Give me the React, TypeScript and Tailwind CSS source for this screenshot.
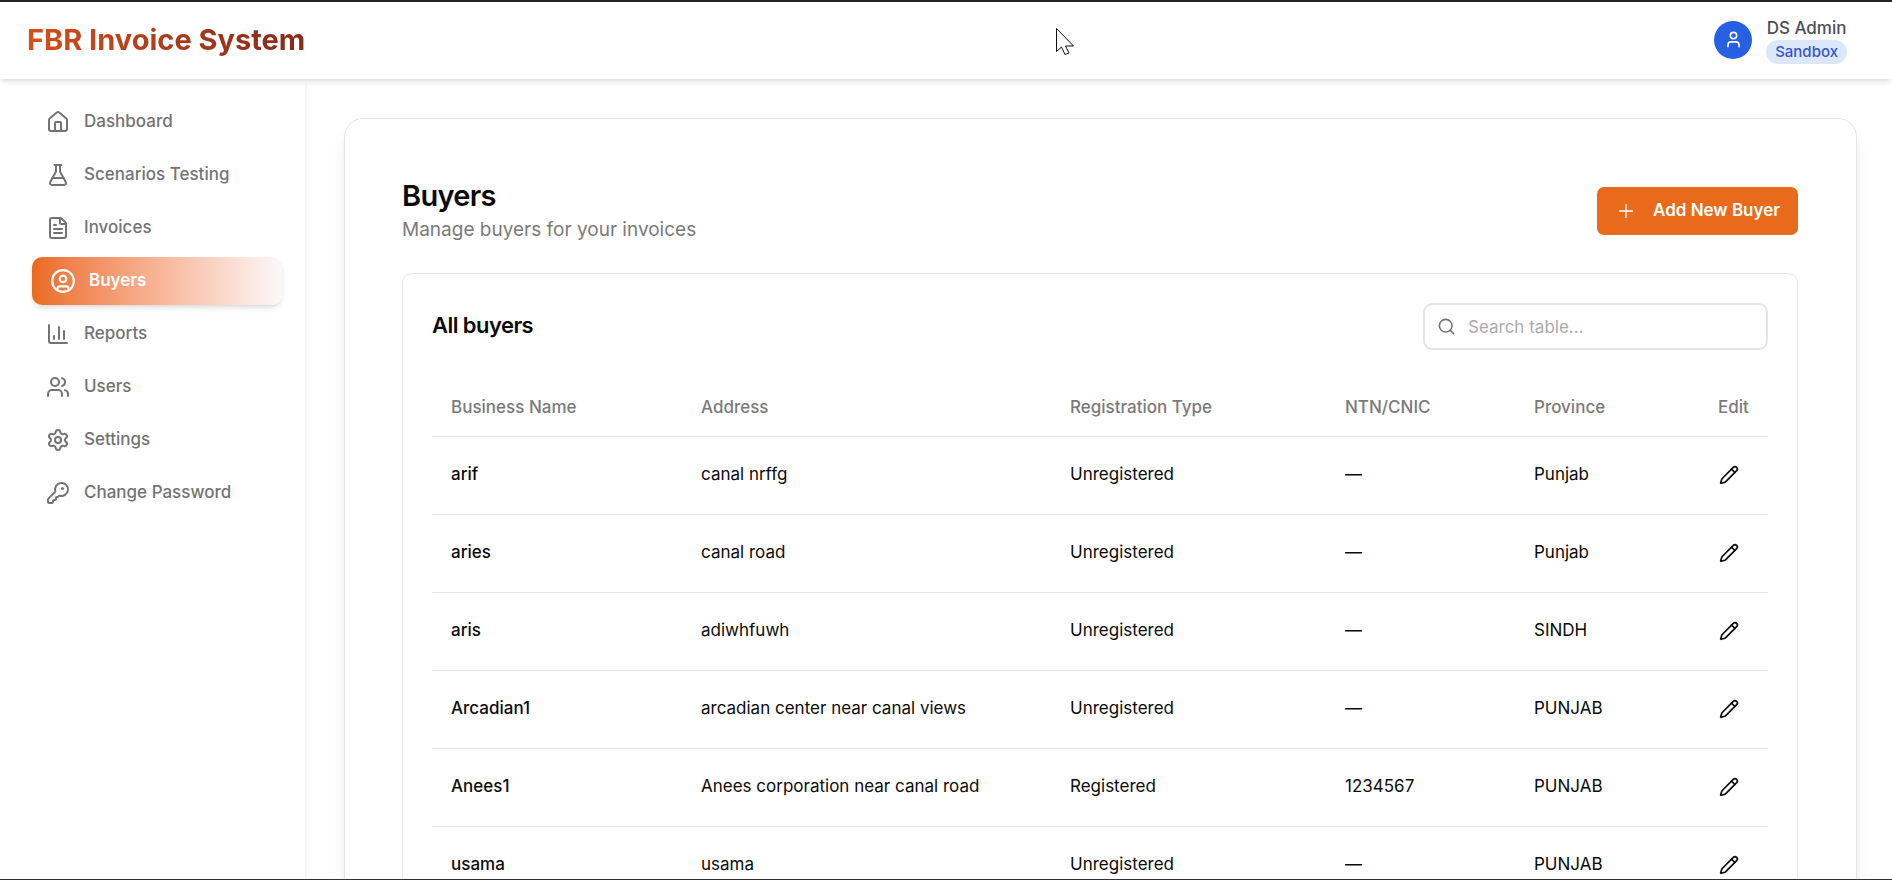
import {
  House, FlaskConical, FileText, CircleUser, BarChart3, Users, Settings, KeyRound,
  User, Plus, Search, Pencil
} from 'lucide-react';

const navItems = [
  { label: 'Dashboard', icon: House },
  { label: 'Scenarios Testing', icon: FlaskConical },
  { label: 'Invoices', icon: FileText },
  { label: 'Buyers', icon: CircleUser, active: true },
  { label: 'Reports', icon: BarChart3 },
  { label: 'Users', icon: Users },
  { label: 'Settings', icon: Settings },
  { label: 'Change Password', icon: KeyRound },
];

const buyers = [
  { name: 'arif', address: 'canal nrffg', type: 'Unregistered', ntn: '—', province: 'Punjab' },
  { name: 'aries', address: 'canal road', type: 'Unregistered', ntn: '—', province: 'Punjab' },
  { name: 'aris', address: 'adiwhfuwh', type: 'Unregistered', ntn: '—', province: 'SINDH' },
  { name: 'Arcadian1', address: 'arcadian center near canal views', type: 'Unregistered', ntn: '—', province: 'PUNJAB' },
  { name: 'Anees1', address: 'Anees corporation near canal road', type: 'Registered', ntn: '1234567', province: 'PUNJAB' },
  { name: 'usama', address: 'usama', type: 'Unregistered', ntn: '—', province: 'PUNJAB' },
];

function Header() {
  return (
    <header className="relative z-10 flex h-[79px] shrink-0 items-center justify-between border-t-2 border-[#222222] bg-white pr-[45px] pb-[2px] pl-[27px] shadow-md">
      <h1 className="bg-linear-to-r from-[#d4501a] to-[#862a1c] bg-clip-text text-[29px] font-bold text-transparent">
        FBR Invoice System
      </h1>
      <div className="flex items-center gap-[14px]">
        <div className="flex size-[38px] items-center justify-center rounded-full bg-[#2860e2] text-white">
          <User className="size-[19px]" />
        </div>
        <div className="flex flex-col items-center">
          <span className="text-[17px] leading-6 font-medium text-[#4b4f57]">DS Admin</span>
          <span className="rounded-full bg-[#dde7fb] px-[9px] text-[15px] leading-6 font-medium text-[#3654cc]">Sandbox</span>
        </div>
      </div>
    </header>
  );
}

function Sidebar() {
  return (
    <nav className="flex w-[305px] shrink-0 flex-col gap-[5px] bg-white pt-[19px] pr-[23px] pl-[32px] shadow-md">
      {navItems.map((item) => (
        <a
          key={item.label}
          href="#"
          className={
            item.active
              ? 'flex h-[48px] items-center gap-[13px] rounded-[10px] bg-linear-to-r from-[#ea6a1c] to-[#faf8fa] px-[18px] text-[17px] font-semibold text-white shadow-md'
              : 'flex h-[48px] items-center gap-[14px] rounded-[10px] px-[14px] text-[17px] font-medium text-[#737373]'
          }
        >
          <item.icon className={item.active ? 'size-[26px]' : 'size-[24px]'} strokeWidth={2} />
          {item.label}
        </a>
      ))}
    </nav>
  );
}

function BuyersTable() {
  return (
    <table className="mt-[29px] w-full table-fixed text-left text-[17px]">
      <thead>
        <tr className="h-[57px] border-b border-[#e5e5e5] text-[#7a7a7a]">
          <th className="w-[249px] px-[19px] font-medium">Business Name</th>
          <th className="w-[369px] px-[20px] font-medium">Address</th>
          <th className="w-[275px] px-[20px] font-medium">Registration Type</th>
          <th className="w-[189px] px-[20px] font-medium">NTN/CNIC</th>
          <th className="w-[185px] px-[20px] font-medium">Province</th>
          <th className="w-[69px] px-[19px] font-medium">Edit</th>
        </tr>
      </thead>
      <tbody>
        {buyers.map((buyer) => (
          <tr key={buyer.name} className="h-[78px] border-b border-[#e5e5e5] text-neutral-950">
            <td className="px-[19px] font-medium">{buyer.name}</td>
            <td className="px-[20px]">{buyer.address}</td>
            <td className="px-[20px]">{buyer.type}</td>
            <td className="px-[20px]">{buyer.ntn}</td>
            <td className="px-[20px]">{buyer.province}</td>
            <td className="px-[20px]">
              <button type="button" aria-label="Edit buyer" className="flex items-center">
                <Pencil className="size-[20px]" />
              </button>
            </td>
          </tr>
        ))}
      </tbody>
    </table>
  );
}

export default function App() {
  return (
    <div className="relative flex h-screen flex-col overflow-hidden border-b border-[#333333] bg-white font-[Inter,sans-serif]">
      <Header />
      <div className="flex min-h-0 flex-1">
        <Sidebar />
        <main className="min-w-0 flex-1 pt-[39px] pr-[35px] pl-[39px]">
          <div className="rounded-[19px] border border-[#e5e5e5] bg-white pt-[58px] pr-[58px] pb-[58px] pl-[57px] shadow-lg">
            <div className="flex items-center justify-between">
              <div>
                <h2 className="text-[29px] leading-[38px] font-semibold tracking-tight text-neutral-950">Buyers</h2>
                <p className="text-[19px] leading-[29px] text-[#7a7a7a]">Manage buyers for your invoices</p>
              </div>
              <button type="button" className="flex h-[48px] items-center rounded-[7px] bg-[#ea6a1c] px-[18px] text-[17px] font-semibold text-white">
                <Plus className="mr-[16px] size-[22px]" strokeWidth={1.5} />
                Add New Buyer
              </button>
            </div>

            <section className="mt-[29px] rounded-[10px] border border-[#e5e5e5] bg-white px-[29px] pt-[29px] pb-[29px]">
              <div className="flex items-start justify-between">
                <h3 className="text-[22px] leading-[44px] font-semibold tracking-tight text-neutral-950">All buyers</h3>
                <label className="relative block">
                  <Search className="absolute top-[14px] left-[14px] size-[19px] text-[#737373]" />
                  <input
                    type="text"
                    aria-label="Search table"
                    placeholder="Search table..."
                    className="h-[47px] w-[345px] rounded-[9px] border-2 border-[#e5e5e5] bg-white pr-4 pl-[43px] text-[17px] placeholder:text-[#ababab]"
                  />
                </label>
              </div>
              <BuyersTable />
            </section>
          </div>
        </main>
      </div>

      {/* Mouse pointer */}
      <svg className="absolute top-[27px] left-[1055px] z-20 h-[29px] w-[20px]" viewBox="0 0 20 29" fill="white" stroke="#111111" strokeWidth="1">
        <path d="M1.500 1.500V24.500L6.500 20L10 27.500L14 26L10.500 19H18.500Z" />
      </svg>
    </div>
  );
}
